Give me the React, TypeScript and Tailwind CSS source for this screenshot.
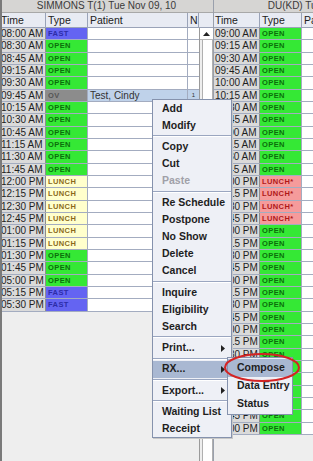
import React from "react";

type Row = { time: string; type: string; patient?: string; n?: string };

const typeStyle: Record<string, string> = {
    OPEN: "bg-[#35e835] text-[#0b6e0b]",
    FAST: "bg-[#6464f2] text-[#2c2ca8]",
    OV: "bg-[#8c8c8c] text-[#555555]",
    LUNCH: "bg-[#ffffcc] text-[#8a6a1a]",
    "LUNCH*": "bg-[#f59b9b] text-[#b01818]",
};

const leftRows: Row[] = [
    { time: "08:00 AM", type: "FAST" },
    { time: "08:30 AM", type: "OPEN" },
    { time: "08:45 AM", type: "OPEN" },
    { time: "09:15 AM", type: "OPEN" },
    { time: "09:30 AM", type: "OPEN" },
    { time: "09:45 AM", type: "OV", patient: "Test, Cindy", n: "1" },
    { time: "10:15 AM", type: "OPEN" },
    { time: "10:30 AM", type: "OPEN" },
    { time: "10:45 AM", type: "OPEN" },
    { time: "11:15 AM", type: "OPEN" },
    { time: "11:30 AM", type: "OPEN" },
    { time: "11:45 AM", type: "OPEN" },
    { time: "12:00 PM", type: "LUNCH" },
    { time: "12:15 PM", type: "LUNCH" },
    { time: "12:30 PM", type: "LUNCH" },
    { time: "12:45 PM", type: "LUNCH" },
    { time: "01:00 PM", type: "LUNCH" },
    { time: "01:15 PM", type: "LUNCH" },
    { time: "01:30 PM", type: "OPEN" },
    { time: "01:45 PM", type: "OPEN" },
    { time: "05:00 PM", type: "OPEN" },
    { time: "05:15 PM", type: "FAST" },
    { time: "05:30 PM", type: "FAST" },
];

// 09:00 AM .. 05:00 PM every quarter hour, lunch block at noon
const rightRows: Row[] = [];
for (let m = 9 * 60; m <= 17 * 60; m += 15) {
    const h24 = Math.floor(m / 60);
    const h = h24 > 12 ? h24 - 12 : h24;
    const mm = m % 60;
    const time = `${String(h).padStart(2, "0")}:${String(mm).padStart(2, "0")} ${h24 >= 12 ? "PM" : "AM"}`;
    rightRows.push({ time, type: h24 === 12 ? "LUNCH*" : "OPEN" });
}

const font = "font-['Liberation_Sans',Arial,sans-serif]";

const Panel = ({ title, rows }: { title: string; rows: Row[] }) => (
    <div className="flex w-[214px] shrink-0 flex-col border-r border-[#9aa0ac]">
        <div className="h-[13px] whitespace-nowrap border-b border-[#a8a8a8] bg-[#d6d5d3] text-center text-[10px] leading-[12px] text-[#3a3a3a]">
            {title}
        </div>
        <div className="flex h-[15px] border-b border-[#9aa3b8] bg-[#e8ebf3] text-[10.5px] leading-[14px] text-[#222]">
            <div className="w-[46px] border-r border-[#9aa3b8] pl-[1px]">Time</div>
            <div className="w-[42px] border-r border-[#9aa3b8] pl-[2px]">Type</div>
            <div className="w-[100px] border-r border-[#9aa3b8] pl-[2px]">Patient</div>
            <div className="w-[11px] border-r border-[#9aa3b8] pl-[2px]">N</div>
            <div className="flex-1" />
        </div>
        <div className="flex flex-1">
            <div className="w-[199px]">
                {rows.map((r) => (
                    <div key={r.time} className="box-border flex h-[12.33px] border-b border-[#a3acc0]">
                        <div className="w-[46px] border-r border-[#8e8e8e] bg-[#dadada] pl-[1px] text-[10px] leading-[11px] whitespace-nowrap text-[#1e1e1e]">
                            {r.time}
                        </div>
                        <div className={`w-[42px] border-r border-[#a3acc0] pl-[2px] text-[7.5px] font-bold leading-[11px] tracking-[0.4px] ${typeStyle[r.type]}`}>
                            {r.type}
                        </div>
                        <div className={`w-[100px] border-r border-[#a3acc0] pl-[2px] text-[10px] leading-[11px] text-[#333] ${r.patient ? "bg-[#bfd2ea]" : "bg-white"}`}>
                            {r.patient}
                        </div>
                        <div className={`w-[11px] text-center text-[6px] leading-[11px] text-[#333] ${r.patient ? "bg-[#bfd2ea]" : "bg-white"}`}>
                            {r.n}
                        </div>
                    </div>
                ))}
            </div>
            <div className="flex w-[15px] flex-col border-l border-[#9a9a9a] bg-[#eeeeee]">
                <div className="flex h-[12px] items-center justify-center border-b border-[#b8b8b8] bg-white">
                    <svg width="7" height="4" viewBox="0 0 7 4">
                        <path d="M0 4 L3.5 0 L7 4 Z" fill="#222" />
                    </svg>
                </div>
                <div className="ml-[2px] flex-1 border-l border-r border-[#b0b0b0] bg-white" />
            </div>
        </div>
    </div>
);

type Item = { label: string; disabled?: boolean; sub?: boolean; active?: boolean } | "sep";

const menu: Item[] = [
    { label: "Add" },
    { label: "Modify" },
    "sep",
    { label: "Copy" },
    { label: "Cut" },
    { label: "Paste", disabled: true },
    "sep",
    { label: "Re Schedule" },
    { label: "Postpone" },
    { label: "No Show" },
    { label: "Delete" },
    { label: "Cancel" },
    "sep",
    { label: "Inquire" },
    { label: "Eligibility" },
    { label: "Search" },
    "sep",
    { label: "Print...", sub: true },
    "sep",
    { label: "RX...", sub: true, active: true },
    "sep",
    { label: "Export...", sub: true },
    "sep",
    { label: "Waiting List" },
    { label: "Receipt" },
];

const Arrow = () => (
    <svg width="4" height="7" viewBox="0 0 4 7" className="ml-auto">
        <path d="M0 0 L4 3.5 L0 7 Z" fill="#222" />
    </svg>
);

export default function App() {
    return (
        <div className={`relative flex h-[461px] w-[313px] overflow-hidden border-l-2 border-[#7a7a7a] bg-[#eeeeee] ${font}`}>
            <div className="-ml-[2px] flex">
                <Panel title="SIMMONS T(1) Tue Nov 09, 10" rows={leftRows} />
                <Panel title="DU(KD) Tue Nov 09, 10" rows={rightRows} />
            </div>

            {/* context menu */}
            <div className="absolute left-[150px] top-[99px] w-[80px] border border-[#8592ad] bg-[#eef0f6] py-0 text-[10.5px] font-bold text-[#1e1e1e] shadow-[1px_1px_0_#c8c8c8]">
                {menu.map((it, i) =>
                    it === "sep" ? (
                        <div key={i} className="flex h-[4px] flex-col justify-center">
                            <div className="h-px bg-[#9aa6c0]" />
                            <div className="h-px bg-white" />
                        </div>
                    ) : (
                        <div
                            key={i}
                            className={`flex h-[17.2px] items-center whitespace-nowrap pl-[9px] pr-[6px] ${it.active ? "bg-[#a9b8d2]" : ""} ${it.disabled ? "text-[#a0a0a8]" : ""}`}
                        >
                            {it.label}
                            {it.sub && <Arrow />}
                        </div>
                    )
                )}
            </div>

            {/* RX submenu */}
            <div className="absolute left-[225px] top-[357px] w-[66px] border border-[#8592ad] bg-[#eef0f6] py-[1px] text-[10.5px] font-bold text-[#1e1e1e]">
                <div className="flex h-[18px] items-center bg-[#a9b8d2] pl-[9px]">Compose</div>
                <div className="flex h-[18px] items-center whitespace-nowrap pl-[9px]">Data Entry</div>
                <div className="flex h-[18px] items-center pl-[9px]">Status</div>
            </div>

            <svg className="absolute left-[221px] top-[352px]" width="79" height="31" viewBox="0 0 79 31">
                <ellipse cx="39" cy="15.5" rx="37" ry="13.5" fill="none" stroke="#d42424" strokeWidth="2" />
            </svg>
        </div>
    );
}
